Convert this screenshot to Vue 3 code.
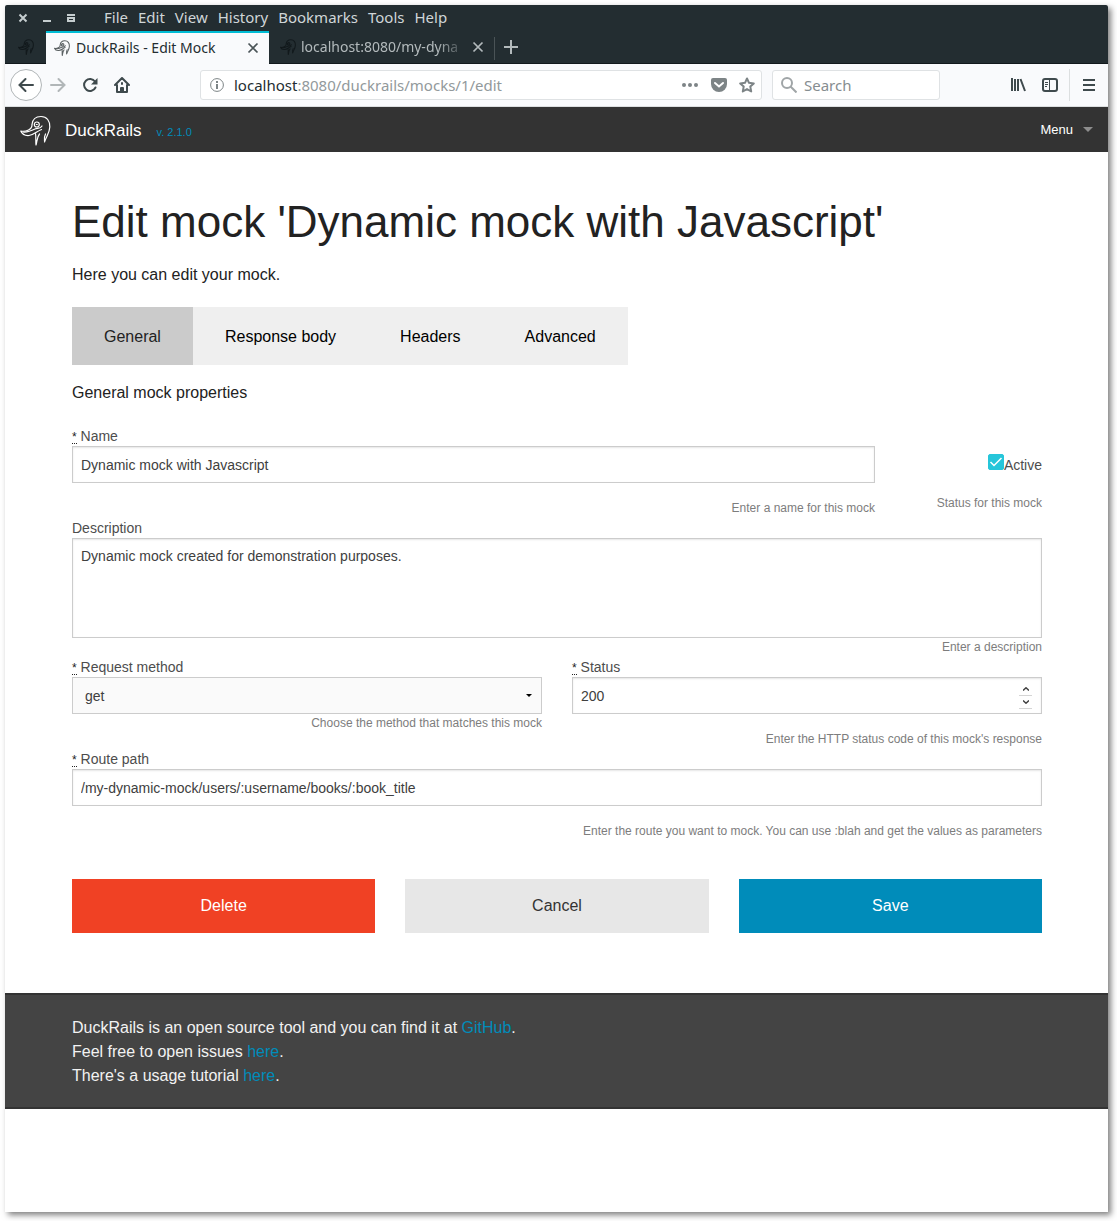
<script setup>
import { ref } from 'vue'

const menus = ['File', 'Edit', 'View', 'History', 'Bookmarks', 'Tools', 'Help']
const sections = ['General', 'Response body', 'Headers', 'Advanced']
const activeSection = ref('General')

const name = ref('Dynamic mock with Javascript')
const active = ref(true)
const description = ref('Dynamic mock created for demonstration purposes.')
const method = ref('get')
const methods = ['get', 'post', 'put', 'patch', 'delete']
const status = ref(200)
const route = ref('/my-dynamic-mock/users/:username/books/:book_title')
const search = ref('')
</script>

<template>
  <svg class="defs" width="0" height="0" aria-hidden="true">
    <symbol id="duck" viewBox="0 0 31 31">
      <g fill="none" stroke="currentColor" stroke-linecap="round" stroke-linejoin="round">
        <path d="M12 9.500C12.500 4.500 16 1.500 21 1.500C27 1.500 30 6 29.800 12C29.600 18 26.500 21 24.500 27" />
        <path d="M24.500 26C24 23 24.500 21 25.500 19" />
        <circle cx="16.800" cy="9.500" r="2.500" />
        <path d="M16.300 9.500H17.300" />
        <path d="M12 10C12 12.500 10.500 14 8.500 15C6 16.200 3 16.500 .8 16C2 19 5 20.800 9 20.500C14 20 16.500 16.500 21.500 14.500" />
        <path d="M3 17C8 17.500 12 15.500 15 14C18 13 20.500 14 22 11" />
        <path d="M15.500 18.500C16.200 22 15.500 26 16 30C17.200 26.500 16.800 22 19.500 19" />
      </g>
    </symbol>
  </svg>

  <div class="desktop">
    <div class="window">
      <header class="chrome">
        <div class="titlebar">
          <div class="controls">
            <button aria-label="Close window"><svg width="10" height="10"><path d="M1.500 1.500L8.500 8.500M8.500 1.500L1.500 8.500" stroke="#c5cdcf" stroke-width="2" /></svg></button>
            <button aria-label="Minimize window"><svg width="10" height="10"><path d="M1 8H9" stroke="#c5cdcf" stroke-width="2" /></svg></button>
            <button aria-label="Restore window"><svg width="10" height="10"><path d="M1 2H9" stroke="#c5cdcf" stroke-width="2" /><path d="M1 4H9V9H1ZM3 6V7H7V6Z" fill="#c5cdcf" fill-rule="evenodd" /></svg></button>
          </div>
          <nav class="menus">
            <a v-for="m in menus" :key="m" href="#">{{ m }}</a>
          </nav>
        </div>

        <div class="tabstrip">
          <button class="tab pinned" aria-label="DuckRails"><svg class="favicon"><use href="#duck" /></svg></button>
          <div class="tab current">
            <svg class="favicon"><use href="#duck" /></svg>
            <span class="tab-title">DuckRails - Edit Mock</span>
            <button aria-label="Close tab"><svg width="12" height="12"><path d="M1.500 1.500L10.500 10.500M10.500 1.500L1.500 10.500" stroke="#4a5457" stroke-width="1.700" /></svg></button>
          </div>
          <div class="tab other">
            <svg class="favicon"><use href="#duck" /></svg>
            <span class="tab-title faded">localhost:8080/my-dyna</span>
            <button aria-label="Close tab"><svg width="12" height="12"><path d="M1.500 1.500L10.500 10.500M10.500 1.500L1.500 10.500" stroke="#b3babc" stroke-width="1.700" /></svg></button>
          </div>
          <button class="new-tab" aria-label="New tab"><svg width="14" height="14"><path d="M7 0V14M0 7H14" stroke="#b3babc" stroke-width="2" /></svg></button>
        </div>

        <div class="toolbar">
          <button class="back" aria-label="Back"><svg width="16" height="16" fill="none" stroke="#3f4a4d" stroke-width="2" stroke-linecap="round"><path d="M15 8H1.500M7.500 2L1.500 8L7.500 14" /></svg></button>
          <button class="icon" aria-label="Forward"><svg width="16" height="16" fill="none" stroke="#b1b6b8" stroke-width="2" stroke-linecap="round"><path d="M1 8H14.500M8.500 2L14.500 8L8.500 14" /></svg></button>
          <button class="icon" aria-label="Reload"><svg width="16" height="16"><path d="M13 4.500A6 6 0 1 0 13.500 10.500" fill="none" stroke="#3f4a4d" stroke-width="2" stroke-linecap="round" /><path d="M15.500 1V7.500H9Z" fill="#3f4a4d" /></svg></button>
          <button class="icon" aria-label="Home"><svg width="16" height="16" fill="none" stroke="#3f4a4d" stroke-width="2" stroke-linejoin="round" stroke-linecap="round"><path d="M1 8L8 1L15 8M3 8V15H13V8" /><path d="M7 15V11H9V15M8 6V7" /></svg></button>
          <span class="space"></span>
          <div class="urlbar">
            <svg width="14" height="14"><circle cx="7" cy="7" r="6.400" fill="none" stroke="#7d8486" /><path d="M7 6V11M7 3V5" stroke="#7d8486" stroke-width="2" /></svg>
            <span class="url">localhost<i>:8080/duckrails/mocks/1/edit</i></span>
            <button aria-label="Page actions"><svg width="18" height="16" fill="#7d8486"><circle cx="3" cy="8" r="2" /><circle cx="9" cy="8" r="2" /><circle cx="15" cy="8" r="2" /></svg></button>
            <button aria-label="Save to Pocket"><svg width="16" height="16"><path d="M2 1H14Q16 1 16 3V7A8 8 0 0 1 0 7V3Q0 1 2 1Z" fill="#7d8486" /><path d="M4 6L8 9.500L12 6" fill="none" stroke="#fff" stroke-width="2" stroke-linecap="round" /></svg></button>
            <button aria-label="Bookmark this page"><svg width="16" height="16"><path d="M8 1.500L10 5.800L14.800 6.400L11.300 9.600L12.200 14.500L8 12.100L3.800 14.500L4.700 9.600L1.200 6.400L6 5.800Z" fill="none" stroke="#7d8486" stroke-width="2" stroke-linejoin="round" /></svg></button>
          </div>
          <label class="searchbar">
            <svg width="16" height="16" fill="none" stroke="#a0a5a7" stroke-width="2"><circle cx="6" cy="6" r="5" /><path d="M9.500 9.500L15.500 15.500" /></svg>
            <input v-model="search" type="text" placeholder="Search" aria-label="Search" />
          </label>
          <span class="space"></span>
          <button class="icon" aria-label="Library"><svg width="16" height="16" stroke="#3f4a4d" stroke-width="2"><path d="M2 1V14M5 2V14M8 2V14M10.500 2L15 14" /></svg></button>
          <button class="icon" aria-label="Sidebars"><svg width="16" height="16" fill="none" stroke="#3f4a4d"><rect x="1" y="2" width="14" height="12" rx="2" stroke-width="2" /><path d="M7.500 2V14M3 5.500H6M3 7.500H6M3 9.500H5" /></svg></button>
          <span class="divider"></span>
          <button class="icon menu-icon" aria-label="Open menu"><svg width="12" height="14"><path d="M0 2H12M0 7H12M0 12H12" stroke="#3f4a4d" stroke-width="2" /></svg></button>
        </div>
      </header>

      <nav class="topbar">
        <a class="brand" href="#"><svg class="logo"><use href="#duck" /></svg>DuckRails</a>
        <a class="version" href="#">v. 2.1.0</a>
        <button class="menu-button">Menu</button>
      </nav>

      <main class="content">
        <h1>Edit mock 'Dynamic mock with Javascript'</h1>
        <p class="lead">Here you can edit your mock.</p>

        <div class="sections" role="tablist">
          <button
            v-for="s in sections"
            :key="s"
            role="tab"
            :aria-selected="s === activeSection"
            :class="{ selected: s === activeSection }"
            @click="activeSection = s"
          >{{ s }}</button>
        </div>
        <p class="section-title">General mock properties</p>

        <form @submit.prevent>
          <div class="row">
            <div class="field">
              <label for="name"><abbr title="required">*</abbr> Name</label>
              <input id="name" v-model="name" class="box" type="text" />
              <small class="hint spaced">Enter a name for this mock</small>
            </div>
            <div class="field status-field">
              <label class="check"><input v-model="active" type="checkbox" />Active</label>
              <small class="hint">Status for this mock</small>
            </div>
          </div>

          <div class="field">
            <label for="description">Description</label>
            <textarea id="description" v-model="description" class="box"></textarea>
            <small class="hint">Enter a description</small>
          </div>

          <div class="row">
            <div class="field">
              <label for="method"><abbr title="required">*</abbr> Request method</label>
              <div class="select-wrap">
                <select id="method" v-model="method" class="box">
                  <option v-for="m in methods" :key="m">{{ m }}</option>
                </select>
                <svg class="caret" width="6" height="3"><path d="M0 0H6L3 3Z" /></svg>
              </div>
              <small class="hint">Choose the method that matches this mock</small>
            </div>
            <div class="field">
              <label for="status"><abbr title="required">*</abbr> Status</label>
              <div class="select-wrap">
                <input id="status" v-model="status" class="box" type="number" />
                <div class="stepper">
                  <button type="button" aria-label="Increase" @click="status++"><svg width="6" height="4"><path d="M0 3.500L3 .8L6 3.500" /></svg></button>
                  <button type="button" aria-label="Decrease" @click="status--"><svg width="6" height="4"><path d="M0 .5L3 3.200L6 .5" /></svg></button>
                </div>
              </div>
              <small class="hint spaced">Enter the HTTP status code of this mock's response</small>
            </div>
          </div>

          <div class="field">
            <label for="route"><abbr title="required">*</abbr> Route path</label>
            <input id="route" v-model="route" class="box" type="text" />
            <small class="hint spaced">Enter the route you want to mock. You can use :blah and get the values as parameters</small>
          </div>

          <div class="row actions">
            <button type="button" class="delete">Delete</button>
            <button type="button" class="cancel">Cancel</button>
            <button type="submit" class="save">Save</button>
          </div>
        </form>
      </main>

      <footer class="footer">
        <p>DuckRails is an open source tool and you can find it at <a href="#">GitHub</a>.</p>
        <p>Feel free to open issues <a href="#">here</a>.</p>
        <p>There's a usage tutorial <a href="#">here</a>.</p>
      </footer>
    </div>
  </div>
</template>

<style>
body {
  margin: 0;
  background: #fff;
}
</style>

<style scoped>
* {
  box-sizing: border-box;
}
svg {
  display: block;
  flex: none;
}
.defs {
  position: absolute;
}
a {
  text-decoration: none;
  color: #008cba;
}
button {
  font: inherit;
  border: 0;
  padding: 0;
  background: none;
  cursor: pointer;
}
h1,
p {
  margin: 0;
}
.desktop {
  min-height: 100vh;
  padding: 5px 9px 9px 5px;
  display: flex;
}
.window {
  flex: 1;
  min-width: 0;
  background: #fff;
  box-shadow: 3px 3px 6px rgba(0, 0, 0, 0.5);
  font: 16px/26px "Liberation Sans", Arial, sans-serif;
  color: #222;
}

/* Browser chrome */
.chrome {
  font: 15px/20px "Noto Sans", sans-serif;
}
.titlebar {
  display: flex;
  align-items: center;
  height: 26px;
  background: #232d31;
  border-radius: 2px 2px 0 0;
}
.controls {
  display: flex;
  gap: 14px;
  padding: 0 28px 0 13px;
}
.menus {
  display: flex;
  gap: 10px;
  padding-bottom: 2px;
}
.menus a {
  color: #d0d6d8;
}
.tabstrip {
  display: flex;
  align-items: stretch;
  height: 33px;
  background: #232d31;
  font-size: 14px;
}
.tab {
  display: flex;
  align-items: center;
  color: #12191c;
  border-bottom: 1px solid #12191c;
}
.favicon {
  width: 16px;
  height: 16px;
  stroke-width: 2;
}
.pinned {
  width: 41px;
  justify-content: center;
}
.tab-title {
  flex: 1;
  min-width: 0;
  overflow: hidden;
  white-space: nowrap;
}
.current {
  width: 223px;
  padding: 0 10px 2px 8px;
  gap: 6px;
  background: #f9fafc;
  border-top: 2px solid #00bcd4;
  border-bottom: 0;
}
.current .favicon {
  color: #5b6163;
}
.current .tab-title {
  color: #232d31;
}
.other {
  width: 225px;
  padding: 0 10px 0 11px;
  gap: 5px;
}
.faded {
  color: #b3babc;
  mask-image: linear-gradient(to right, #000 82%, transparent);
}
.new-tab {
  display: flex;
  flex: 1;
  align-items: center;
  padding-left: 10px;
  border-bottom: 1px solid #12191c;
  background: linear-gradient(#4a5356, #4a5356) 0 6px / 1px 23px no-repeat;
}
.toolbar {
  display: flex;
  align-items: center;
  height: 43px;
  padding: 0 6px 0 5px;
  background: #f9fafc;
  border-bottom: 1px solid #dcdfe0;
}
.back {
  display: grid;
  place-items: center;
  width: 32px;
  height: 32px;
  border: 1px solid #b1b6b8;
  border-radius: 50%;
  background: #fff;
}
.icon {
  display: grid;
  place-items: center;
  width: 32px;
  height: 32px;
}
.space {
  flex: 0 1 62px;
}
.urlbar,
.searchbar {
  display: flex;
  align-items: center;
  height: 30px;
  padding: 0 8px;
  background: #fff;
  border: 1px solid #dfe2e4;
  border-radius: 3px;
}
.urlbar {
  flex: 1;
  min-width: 0;
  gap: 12px;
  padding: 0 6px 0 9px;
}
.url {
  flex: 1;
  margin-left: -2px;
  overflow: hidden;
  white-space: nowrap;
  color: #232d31;
}
.url i {
  font-style: normal;
  color: #92999b;
}
.searchbar {
  width: 168px;
  margin-left: 10px;
  gap: 7px;
}
.searchbar input {
  width: 100%;
  min-width: 0;
  padding: 0;
  border: 0;
  background: none;
  font: inherit;
}
.searchbar input::placeholder {
  color: #868d90;
}
.divider {
  width: 1px;
  height: 32px;
  margin: 0 6px 0 3px;
  background: #dcdfe0;
}
.menu-icon {
  width: 26px;
}

/* Application bar */
.topbar {
  display: flex;
  align-items: center;
  height: 45px;
  padding: 0 15px;
  background: #333;
  line-height: 45px;
}
.brand {
  display: flex;
  align-items: center;
  gap: 14px;
  padding-top: 2px;
  font-size: 17px;
  color: #fff;
}
.logo {
  width: 31px;
  height: 31px;
  stroke-width: 1.2;
}
.version {
  margin-left: 15px;
  font-size: 11px;
  padding-top: 5px;
}
.menu-button {
  display: flex;
  align-items: center;
  gap: 10px;
  margin-left: auto;
  font-size: 13px;
  color: #fff;
}
.menu-button::after {
  content: "";
  border: 5px solid transparent;
  border-top-color: #8d8d8d;
  border-bottom: 0;
}

/* Page */
.content {
  padding: 39px 66px 60px 67px;
}
h1 {
  font-size: 44px;
  line-height: 62px;
  font-weight: 400;
}
.lead {
  margin: 9px 0 19px;
}
.sections {
  display: inline-flex;
  vertical-align: top;
  background: #efefef;
}
.sections button {
  padding: 17px 32px 15px;
  color: #000;
}
.sections .selected {
  background: #cbcbcb;
  color: #222;
}
.section-title {
  margin: 15px 0 19px;
}
.row {
  display: flex;
  gap: 30px;
}
.row > * {
  flex: 1;
  min-width: 0;
}
.field {
  display: flex;
  flex-direction: column;
  font-size: 14px;
  line-height: 21px;
  color: #4d4d4d;
}
.field label {
  height: 21px;
  line-height: 23px;
}
abbr {
  display: inline-block;
  height: 16px;
  font-size: 12px;
  line-height: 18px;
  color: #222;
  text-decoration: none;
  border-bottom: 1px dotted #222;
}
.box {
  display: block;
  width: 100%;
  height: 37px;
  margin: 0;
  padding: 8px;
  border: 1px solid #ccc;
  border-radius: 0;
  background: #fff;
  box-shadow: inset 0 1px 2px rgba(0, 0, 0, 0.1);
  font: 14px/19px "Liberation Sans", Arial, sans-serif;
  color: #404040;
  appearance: none;
}
textarea.box {
  height: 100px;
  resize: none;
}
select.box {
  padding: 9px 12px 7px;
  background: #fafafa;
  box-shadow: none;
}
input[type="number"] {
  appearance: textfield;
}
.select-wrap {
  position: relative;
}
.caret {
  position: absolute;
  right: 10px;
  top: 17px;
  fill: #000;
}
.stepper {
  position: absolute;
  right: 10px;
  top: 6px;
  width: 13px;
}
.stepper button {
  display: grid;
  place-items: center;
  width: 100%;
  height: 13px;
  border-bottom: 1px solid #d5d5d5;
}
.stepper svg {
  fill: none;
  stroke: #444;
  stroke-width: 1.5;
}
.hint {
  font-size: 12px;
  line-height: 18px;
  text-align: right;
  color: #7d7d7d;
}
.spaced {
  margin-top: 16px;
}
.status-field {
  flex: 0 0 137px;
  padding-top: 29px;
}
.check {
  display: flex;
  justify-content: flex-end;
  margin-bottom: 19px;
}
.check input {
  appearance: none;
  width: 16px;
  height: 16px;
  margin: 0;
  border-radius: 2px;
  border: 1px solid #26c6da;
}
.check input:checked {
  background: #26c6da url("data:image/svg+xml,%3Csvg xmlns='http://www.w3.org/2000/svg' viewBox='0 0 14 14'%3E%3Cpath d='M1.500 7L5 10.500L12.500 3' fill='none' stroke='white' stroke-width='1.500'/%3E%3C/svg%3E") center / 14px no-repeat;
}
.actions {
  margin-top: 39px;
}
.actions button {
  height: 54px;
}
.delete {
  background: #f04124;
  color: #fff;
}
.cancel {
  background: #e7e7e7;
  color: #333;
}
.save {
  background: #008cba;
  color: #fff;
}
.footer {
  padding: 21px 66px 19px 67px;
  background: #444;
  border: solid #333;
  border-width: 2px 0;
  line-height: 24px;
  color: #f2f2f2;
}
</style>
